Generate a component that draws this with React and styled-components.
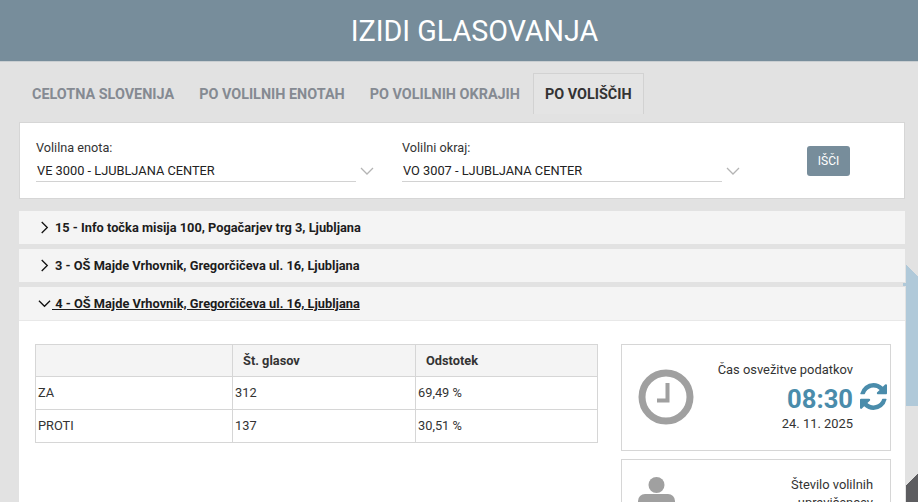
import React from 'react';
import styled, { createGlobalStyle } from 'styled-components';

const Global = createGlobalStyle`
  html, body {
    margin: 0;
    padding: 0;
    height: 502px;
    overflow: hidden;
  }
  body {
    font-family: Roboto, "Liberation Sans", sans-serif;
    color: #333;
    background: #e2e2e2;
  }
`;

const items = [
  { label: '15 - Info točka misija 100, Pogačarjev trg 3, Ljubljana' },
  { label: '3 - OŠ Majde Vrhovnik, Gregorčičeva ul. 16, Ljubljana' },
  { label: '\u00a04 - OŠ Majde Vrhovnik, Gregorčičeva ul. 16, Ljubljana', open: true },
];

const Chevron = ({ open }) => (
  <ChevronSvg viewBox="0 0 14 14" $open={open}>
    {open
      ? <polyline points="1,4 7,10 13,4" />
      : <polyline points="4,1 10,7 4,13" />}
  </ChevronSvg>
);

const SelectArrow = () => (
  <ArrowSvg viewBox="0 0 14 8">
    <polyline points="1,1 7,7 13,1" />
  </ArrowSvg>
);

const RefreshIcon = () => (
  <RefreshSvg viewBox="128 128 1536 1536">
    <path d="M1639 1056q0 5-1 7-64 268-268 434.5t-478 166.5q-146 0-282.5-55t-243.5-157l-129 129q-19 19-45 19t-45-19-19-45v-448q0-26 19-45t45-19h448q26 0 45 19t19 45-19 45l-137 137q71 66 161 102t187 36q134 0 250-65t186-179q11-17 53-117 8-23 30-23h192q13 0 22.5 9.5t9.5 22.5zm25-800v448q0 26-19 45t-45 19h-448q-26 0-45-19t-19-45 19-45l138-138q-148-137-349-137-134 0-250 65t-186 179q-11 17-53 117-8 23-30 23h-199q-13 0-22.5-9.5t-9.5-22.5v-7q65-268 270-434.5t480-166.5q146 0 284 55.5t245 156.5l130-129q19-19 45-19t45 19 19 45z" />
  </RefreshSvg>
);

const App = () => {
  return (
    <Page>
      <Global />
      <Header>IZIDI GLASOVANJA</Header>
      <Tabs>
        <Tab>CELOTNA SLOVENIJA</Tab>
        <Tab>PO VOLILNIH ENOTAH</Tab>
        <Tab>PO VOLILNIH OKRAJIH</Tab>
        <Tab $active>PO VOLIŠČIH</Tab>
      </Tabs>
      <FilterCard>
        <Field>
          <FieldLabel>Volilna enota:</FieldLabel>
          <SelectRow>
            <SelectValue>VE 3000 - LJUBLJANA CENTER</SelectValue>
            <SelectArrow />
          </SelectRow>
        </Field>
        <Field>
          <FieldLabel>Volilni okraj:</FieldLabel>
          <SelectRow>
            <SelectValue>VO 3007 - LJUBLJANA CENTER</SelectValue>
            <SelectArrow />
          </SelectRow>
        </Field>
        <SearchButton>IŠČI</SearchButton>
      </FilterCard>
      <Accordion>
        {items.map((item) => (
          <AccordionHead key={item.label} $open={item.open}>
            <Chevron open={item.open} />
            <HeadText $open={item.open}>{item.label}</HeadText>
          </AccordionHead>
        ))}
      </Accordion>
      <Content>
        <Table>
          <colgroup>
            <col width="197" />
            <col width="183" />
            <col width="182" />
          </colgroup>
          <thead>
            <tr>
              <Th></Th>
              <Th>Št. glasov</Th>
              <Th>Odstotek</Th>
            </tr>
          </thead>
          <tbody>
            <tr>
              <Td>ZA</Td>
              <Td>312</Td>
              <Td>69,49 %</Td>
            </tr>
            <tr>
              <Td>PROTI</Td>
              <Td>137</Td>
              <Td>30,51 %</Td>
            </tr>
          </tbody>
        </Table>
        <Side>
          <InfoCard>
            <ClockIcon viewBox="0 0 56 56">
              <circle cx="28" cy="28" r="24" />
              <polyline points="29.5,14 29.5,31.5 19,31.5" />
            </ClockIcon>
            <InfoText>
              <InfoTitle>Čas osvežitve podatkov</InfoTitle>
              <TimeRow>
                <Time>08:30</Time>
                <RefreshIcon />
              </TimeRow>
              <InfoDate>24. 11. 2025</InfoDate>
            </InfoText>
          </InfoCard>
          <InfoCard $voters>
            <PersonIcon viewBox="0 0 37 40">
              <circle cx="18.5" cy="8" r="8" />
              <rect x="0" y="17" width="37" height="30" rx="7" />
            </PersonIcon>
            <InfoText $voters>
              <InfoTitle>Število volilnih</InfoTitle>
              <InfoTitle>upravičencev</InfoTitle>
            </InfoText>
          </InfoCard>
        </Side>
      </Content>
    </Page>
  );
};

const Page = styled.div`
  width: 918px;
  height: 502px;
  overflow: hidden;
  background:
    linear-gradient(#b0c9d9, #b0c9d9) 903px 283px / 3px 3px no-repeat,
    linear-gradient(225deg, transparent 8px, #b0c9d9 8px) 906px 265px / 12px 141px no-repeat,
    linear-gradient(135deg, transparent 8.5px, #5d5d60 8.5px) 906px 473px / 12px 29px no-repeat,
    #e2e2e2;
`;
const Header = styled.h1`
  margin: 0;
  height: 61px;
  padding-left: 31px;
  background: #778d9b;
  border-bottom: 1px solid #c9ced1;
  color: #fff;
  font-size: 28.7px;
  font-weight: 400;
  line-height: 63px;
  text-align: center;
`;
const Tabs = styled.div`
  display: flex;
  align-items: flex-end;
  height: 52px;
  padding: 0 0 0 20px;
`;
const Tab = styled.div`
  box-sizing: border-box;
  height: 41px;
  padding: 0 11px;
  margin-right: 1px;
  font-size: 14.4px;
  font-weight: 700;
  line-height: 41px;
  color: ${(p) => (p.$active ? '#333' : '#858a92')};
  border: 1px solid ${(p) => (p.$active ? '#d2d2d2' : 'transparent')};
  border-bottom: 0;
  background: ${(p) => (p.$active ? '#e4e4e4' : 'transparent')};
`;
const FilterCard = styled.div`
  box-sizing: border-box;
  display: flex;
  height: 77px;
  margin: 8px 13px 0 19px;
  padding: 16px 16px 0;
  background: #fff;
  border: 1px solid #d6d6d6;
`;
const Field = styled.div`
  width: 366px;
`;
const FieldLabel = styled.div`
  font-size: 12.7px;
  line-height: 18px;
  color: #333;
`;
const SelectRow = styled.div`
  display: flex;
  align-items: center;
  margin-top: 3px;
`;
const SelectValue = styled.div`
  box-sizing: border-box;
  width: 320px;
  height: 22px;
  padding-left: 1px;
  font-size: 12.8px;
  line-height: 21px;
  color: #222;
  border-bottom: 1px solid #d2d2d2;
`;
const ArrowSvg = styled.svg`
  width: 14px;
  height: 8px;
  margin-left: 4px;
  fill: none;
  stroke: #b4b4b4;
  stroke-width: 1.3;
`;
const SearchButton = styled.button`
  width: 43px;
  height: 30px;
  margin: 7px 0 0 39px;
  padding: 0;
  border: 0;
  border-radius: 3px;
  background: #778d9b;
  color: #fff;
  font-family: inherit;
  font-size: 12px;
`;
const Accordion = styled.div`
  display: flex;
  flex-direction: column;
  gap: 5px;
  margin: 12px 13px 0 19px;
`;
const AccordionHead = styled.div`
  display: flex;
  align-items: center;
  height: 33px;
  padding-left: 19px;
  background: #f4f4f4;
  border-bottom: ${(p) => (p.$open ? '1px solid #e8e8e8' : '0')};
`;
const ChevronSvg = styled.svg`
  width: 13px;
  height: 13px;
  flex: none;
  fill: none;
  stroke: #111;
  stroke-width: 1.4;
`;
const HeadText = styled.span`
  margin-left: ${(p) => (p.$open ? '1px' : '4px')};
  font-size: 12.8px;
  font-weight: 700;
  color: #1c1c1c;
  text-decoration: ${(p) => (p.$open ? 'underline' : 'none')};
`;
const Content = styled.div`
  display: flex;
  justify-content: space-between;
  align-items: flex-start;
  height: 200px;
  margin: 0 13px 0 19px;
  padding: 23px 14px 0 16px;
  background: #fff;
`;
const Table = styled.table`
  width: 562px;
  border-collapse: collapse;
  table-layout: fixed;
  font-size: 12.8px;
  color: #333;
`;
const Th = styled.th`
  height: 31px;
  padding: 0 10px;
  text-align: left;
  font-size: 12.8px;
  font-weight: 700;
  background: #f4f4f4;
  border: 1px solid #d6d6d6;
`;
const Td = styled.td`
  height: 30px;
  padding: 0 2px 2px;
  border: 1px solid #d6d6d6;
`;
const Side = styled.div`
  display: flex;
  flex-direction: column;
  gap: 8px;
  width: 270px;
`;
const InfoCard = styled.div`
  box-sizing: border-box;
  display: flex;
  justify-content: space-between;
  align-items: flex-start;
  height: 107px;
  padding: 16px 3px 0 16px;
  border: 1px solid #d6d6d6;
`;
const ClockIcon = styled.svg`
  width: 56px;
  height: 56px;
  margin-top: 8px;
  fill: none;
  stroke: #a0a0a0;
  stroke-width: 7;
  & polyline {
    stroke-width: 4;
  }
`;
const PersonIcon = styled.svg`
  width: 37px;
  height: 40px;
  margin-top: 1px;
  fill: #a0a0a0;
`;
const RefreshSvg = styled.svg`
  width: 27px;
  height: 27px;
  margin-top: -6px;
  fill: #4a8cab;
`;
const InfoText = styled.div`
  display: flex;
  flex-direction: column;
  align-items: flex-end;
  padding-right: ${(p) => (p.$voters ? '14px' : '34px')};
  font-size: 12.9px;
  line-height: 18px;
  color: #333;
`;
const InfoTitle = styled.div`
  white-space: nowrap;
`;
const TimeRow = styled.div`
  display: flex;
  align-items: center;
  gap: 7px;
  margin-right: -34px;
  height: 32px;
  margin-top: 4px;
`;
const Time = styled.span`
  font-size: 25.6px;
  font-weight: 700;
  color: #4a8cab;
`;
const InfoDate = styled.div`
  margin-top: 0;
`;

export default App;
